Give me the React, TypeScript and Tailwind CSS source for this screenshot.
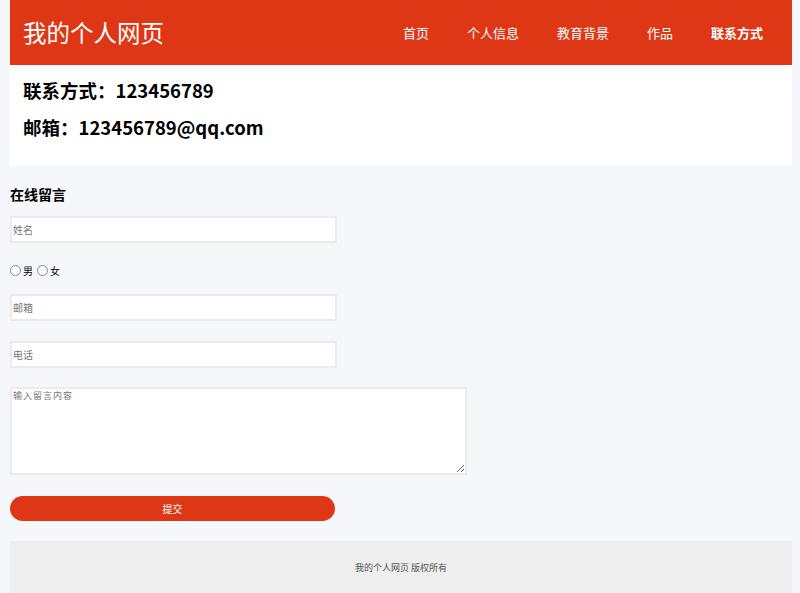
import React from 'react';

const navItems = ['首页', '个人信息', '教育背景', '作品', '联系方式'];

export default function App() {
  return (
    <div
      className="min-h-[593px] bg-[#f6f7fb] pl-[10px] pr-[8px]"
      style={{ fontFamily: '"Noto Sans CJK SC", "Noto Sans", sans-serif' }}
    >
      <header className="flex h-[65px] items-center justify-between bg-[#dd3715] pl-[13px] pr-[10px]">
        <h1 className="text-[23.5px] font-normal leading-none text-white">我的个人网页</h1>
        <nav className="flex items-center">
          {navItems.map((item, i) => (
            <a
              key={item}
              className={`px-[19px] text-[13px] text-white ${i === navItems.length - 1 ? 'font-bold' : ''}`}
            >
              {item}
            </a>
          ))}
        </nav>
      </header>

      <section className="flex h-[100px] flex-col gap-[12px] bg-white pl-[13px] pt-[13px]">
        <p className="text-[18.5px] font-bold leading-[25px] text-black">联系方式：123456789</p>
        <p className="text-[18.5px] font-bold leading-[25px] text-black">邮箱：123456789@qq.com</p>
      </section>

      <form className="flex flex-col pt-[19px]">
        <h2 className="text-[14px] font-bold leading-[20px] text-black">在线留言</h2>
        <input
          placeholder="姓名"
          className="mt-[12px] h-[27px] w-[327px] border-2 border-[#ebebeb] bg-white px-[1px] text-[10px] placeholder:text-[#777]"
        />
        <div className="mt-[20px] flex items-center gap-[2px] text-[10px] text-black">
          <span className="inline-block h-[11px] w-[11px] rounded-full border border-[#888] bg-white" />
          <span>男</span>
          <span className="ml-[2px] inline-block h-[11px] w-[11px] rounded-full border border-[#888] bg-white" />
          <span>女</span>
        </div>
        <input
          placeholder="邮箱"
          className="mt-[16px] h-[27px] w-[327px] border-2 border-[#ebebeb] bg-white px-[1px] text-[10px] placeholder:text-[#777]"
        />
        <input
          placeholder="电话"
          className="mt-[20px] h-[27px] w-[327px] border-2 border-[#ebebeb] bg-white px-[1px] text-[10px] placeholder:text-[#777]"
        />
        <textarea
          placeholder="输入留言内容"
          className="mt-[19px] h-[88px] w-[457px] border-2 border-[#ebebeb] bg-white px-[1px] text-[9px] tracking-[1px] placeholder:text-[#777]"
        />
        <button
          type="button"
          className="mt-[21px] h-[25px] w-[325px] rounded-full bg-[#dd3715] text-[10px] text-white"
        >
          提交
        </button>
      </form>

      <footer className="mt-[20px] flex h-[53px] items-center justify-center bg-[#eeeeee]">
        <p className="text-[9px] text-[#555]">我的个人网页 版权所有</p>
      </footer>
    </div>
  );
}
